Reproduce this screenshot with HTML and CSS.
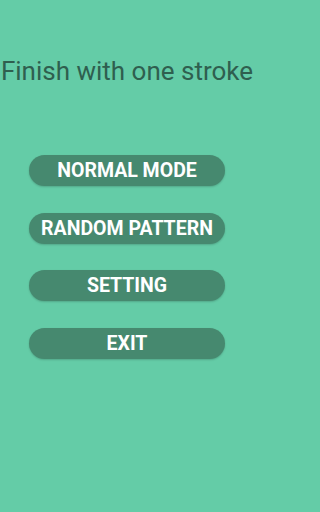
FILE: index.html
```html
<!DOCTYPE html>
<html>
<head>
<meta charset="utf-8">
<link rel="stylesheet" href="styles.css">
</head>
<body>
<div class="screen">
  <h1 class="title">Finish with one stroke</h1>
  <div class="menu">
    <button class="btn">NORMAL MODE</button>
    <button class="btn">RANDOM PATTERN</button>
    <button class="btn">SETTING</button>
    <button class="btn">EXIT</button>
  </div>
</div>
</body>
</html>
```
FILE: styles.css
```css
html, body {
  margin: 0;
  padding: 0;
  background: #64cca7;
}
.screen {
  width: 254px;
  height: 512px;
  overflow: hidden;
  display: flex;
  flex-direction: column;
  align-items: center;
  font-family: Roboto, "Noto Sans", sans-serif;
}
.title {
  margin: 56px 0 0 0;
  font-size: 26px;
  line-height: 30px;
  font-weight: 400;
  color: #2f5f4f;
  white-space: nowrap;
  text-align: center;
}
.menu {
  margin-top: 69px;
  display: flex;
  flex-direction: column;
  gap: 26.7px;
  align-items: center;
}
.btn {
  width: 196px;
  height: 31px;
  border: none;
  border-radius: 16px;
  background: #46896f;
  color: #ffffff;
  font-family: Roboto, "Noto Sans", sans-serif;
  font-weight: 700;
  font-size: 19.5px;
  line-height: 31px;
  padding: 0;
  text-align: center;
  box-shadow: 0 1px 2px rgba(0, 0, 0, 0.18);
}
```
